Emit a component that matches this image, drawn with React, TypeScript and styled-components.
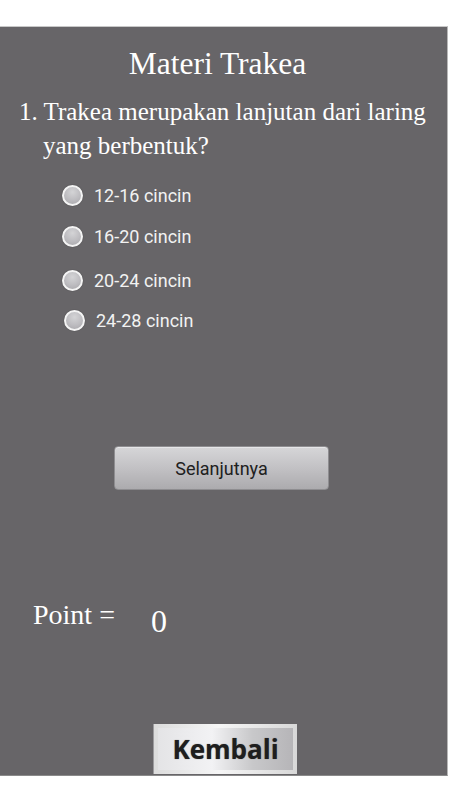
import React from 'react'
import styled, {createGlobalStyle} from 'styled-components'

const GlobalStyle = createGlobalStyle`
  html, body {
    margin: 0;
    padding: 0;
    background: #ffffff;
  }
`

const Screen = styled.div`
  width: 450px;
  height: 800px;
  padding-top: 26px;
  box-sizing: border-box;
  background: #ffffff;
`

const Panel = styled.main`
  width: 448px;
  height: 750px;
  box-sizing: border-box;
  background: #676568;
  border-top: 1px solid #c8c8c8;
  border-right: 1px solid #b8b8b8;
  border-bottom: 1px solid #8a8a8a;
  display: flex;
  flex-direction: column;
`

const Title = styled.h1`
  margin: 19px 0 0 0;
  padding-right: 12px;
  text-align: center;
  font-family: "Liberation Serif", "Times New Roman", serif;
  font-weight: 400;
  font-size: 31.5px;
  line-height: 36px;
  color: #ffffff;
`

const Question = styled.p`
  margin: 13px 0 0 0;
  padding-left: 43px;
  text-indent: -24px;
  font-family: "Liberation Serif", "Times New Roman", serif;
  font-size: 25px;
  line-height: 34px;
  color: #ffffff;
`

const Options = styled.div`
  display: flex;
  flex-direction: column;
  margin-top: 19px;
`

const Option = styled.label<{$top: number; $shift: number}>`
  display: flex;
  align-items: center;
  gap: 11px;
  height: 26px;
  margin-top: ${(p) => p.$top}px;
  padding-left: ${(p) => 62 + p.$shift}px;
  font-family: Roboto, "Noto Sans", sans-serif;
  font-size: 18px;
  color: #f2f2f2;
`

const Radio = styled.span`
  width: 17px;
  height: 17px;
  border-radius: 50%;
  border: 2px solid #f4f4f4;
  background: radial-gradient(circle at 50% 30%, #d4d4d6 0%, #bdbcc0 55%, #a6a5a9 100%);
  box-shadow: 0 0 1px rgba(0, 0, 0, 0.5);
  flex-shrink: 0;
`

const NextButton = styled.button`
  align-self: flex-start;
  margin: 113px 0 0 114px;
  width: 215px;
  height: 44px;
  border: 1px solid #8e8d90;
  border-radius: 4px;
  background: linear-gradient(to bottom, #d6d6d8 0%, #c2c1c4 50%, #acabae 100%);
  box-shadow: inset 0 1px 0 #e6e6e8;
  font-family: Roboto, "Noto Sans", sans-serif;
  font-size: 18px;
  color: #202020;
  padding: 0;
`

const PointRow = styled.div`
  display: flex;
  align-items: baseline;
  margin: 105px 0 0 33px;
  font-family: "Liberation Serif", "Times New Roman", serif;
  color: #ffffff;
`

const PointLabel = styled.span`
  font-size: 28px;
`

const PointValue = styled.span`
  margin-left: 36px;
  font-size: 32px;
  position: relative;
  top: 8px;
`

const BackButton = styled.button`
  align-self: flex-start;
  margin: 92px 0 0 153px;
  width: 144px;
  height: 50px;
  padding: 4px;
  box-sizing: border-box;
  border: none;
  border-left: 1px solid #9c9b9e;
  background: linear-gradient(to right, #dcdcdc 0%, #f6f6f6 45%, #d8d8d8 100%);
`

const BackFace = styled.span`
  display: flex;
  align-items: center;
  justify-content: center;
  width: 100%;
  height: 100%;
  background: linear-gradient(to right, #e4e4e6 0%, #f2f2f4 40%, #c8c8ca 70%, #b6b5b8 100%);
  font-family: "Open Sans", "Liberation Sans", sans-serif;
  font-weight: 700;
  font-size: 26px;
  color: #1e1e1e;
  text-shadow: 0 0 1px #666;
`

const options = [
  {label: '12-16 cincin', top: 0, shift: 0},
  {label: '16-20 cincin', top: 15, shift: 0},
  {label: '20-24 cincin', top: 18, shift: 0},
  {label: '24-28 cincin', top: 14, shift: 2},
]

export default function App() {
  return (
    <Screen>
      <GlobalStyle />
      <Panel>
        <Title>Materi Trakea</Title>
        <Question>1. Trakea merupakan lanjutan dari laring yang berbentuk?</Question>
        <Options>
          {options.map((o) => (
            <Option key={o.label} $top={o.top} $shift={o.shift}>
              <Radio />
              {o.label}
            </Option>
          ))}
        </Options>
        <NextButton>Selanjutnya</NextButton>
        <PointRow>
          <PointLabel>Point =</PointLabel>
          <PointValue>0</PointValue>
        </PointRow>
        <BackButton>
          <BackFace>Kembali</BackFace>
        </BackButton>
      </Panel>
    </Screen>
  )
}
